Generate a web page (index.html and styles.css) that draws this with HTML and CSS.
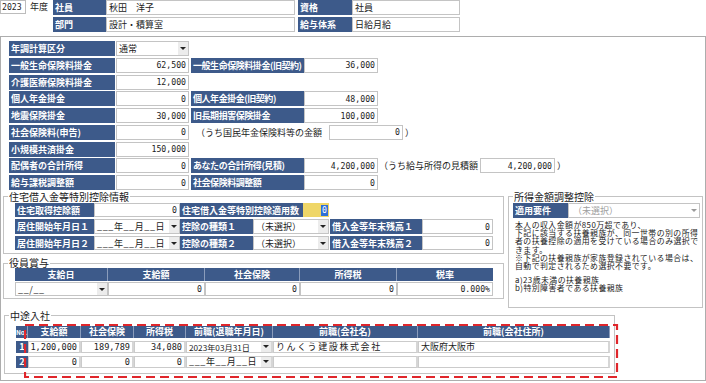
FILE: index.html
```html
<!DOCTYPE html>
<html lang="ja">
<head>
  <meta charset="UTF-8" />
  <title>年末調整 控除情報</title>
  <link rel="stylesheet" href="styles.css">
</head>
<body>
<div class="screen">

  <div class="head">
    <div class="year">2023</div>
    <div class="nendo">年度</div>
    <div class="head-grid">
      <div class="lab">社員</div><div class="box">秋田　洋子</div>
      <div class="lab gap-l">資格</div><div class="box">社員</div>
      <div class="lab">部門</div><div class="box">設計・積算室</div>
      <div class="lab gap-l">給与体系</div><div class="box">日給月給</div>
    </div>
  </div>

  <div class="panel">
    <div class="deduct">
      <div class="drow">
        <div class="lab c1">年調計算区分</div>
        <div class="box sel c2"><span>通常</span><i class="arr"></i></div>
      </div>
      <div class="drow">
        <div class="lab c1">一般生命保険料掛金</div>
        <div class="box num c2">62,500</div>
        <div class="lab c3">一般生命保険料掛金(旧契約)</div>
        <div class="box num c4">36,000</div>
      </div>
      <div class="drow">
        <div class="lab c1">介護医療保険料掛金</div>
        <div class="box num c2">12,000</div>
      </div>
      <div class="drow">
        <div class="lab c1">個人年金掛金</div>
        <div class="box num c2">0</div>
        <div class="lab c3">個人年金掛金(旧契約)</div>
        <div class="box num c4">48,000</div>
      </div>
      <div class="drow">
        <div class="lab c1">地震保険掛金</div>
        <div class="box num c2">30,000</div>
        <div class="lab c3">旧長期損害保険掛金</div>
        <div class="box num c4">100,000</div>
      </div>
      <div class="drow">
        <div class="lab c1">社会保険料(申告)</div>
        <div class="box num c2">0</div>
        <div class="note n1">（うち国民年金保険料等の金額</div>
        <div class="box num c4">0</div>
        <div class="note close">）</div>
      </div>
      <div class="drow">
        <div class="lab c1">小規模共済掛金</div>
        <div class="box num c2">150,000</div>
      </div>
      <div class="drow">
        <div class="lab c1">配偶者の合計所得</div>
        <div class="box num c2">0</div>
        <div class="lab c3">あなたの合計所得(見積)</div>
        <div class="box num c4">4,200,000</div>
        <div class="note n2">（うち給与所得の見積額</div>
        <div class="box num c5">4,200,000</div>
        <div class="note close">）</div>
      </div>
      <div class="drow">
        <div class="lab c1">給与課税調整額</div>
        <div class="box num c2">0</div>
        <div class="lab c3">社会保険料調整額</div>
        <div class="box num c4">0</div>
      </div>
    </div>

    <div class="lower">
      <div class="left">
        <fieldset class="grp housing">
          <legend>住宅借入金等特別控除情報</legend>
          <div class="hgrid">
            <div class="lab">住宅取得控除額</div>
            <div class="box num">0</div>
            <div class="lab span2">住宅借入金等特別控除適用数</div>
            <div class="yellow"><span class="hl">0</span></div>
            <div></div>
            <div></div>
            <div></div>

            <div class="lab">居住開始年月日１</div>
            <div class="box sel"><span class="date">___年__月__日</span><i class="arr"></i></div>
            <div class="lab">控除の種類１</div>
            <div class="box sel span2"><span>（未選択）</span><i class="arr"></i></div>
            <div></div>
            <div class="lab">借入金等年末残高１</div>
            <div class="box num">0</div>

            <div class="lab">居住開始年月日２</div>
            <div class="box sel"><span class="date">___年__月__日</span><i class="arr"></i></div>
            <div class="lab">控除の種類２</div>
            <div class="box sel span2"><span>（未選択）</span><i class="arr"></i></div>
            <div></div>
            <div class="lab">借入金等年末残高２</div>
            <div class="box num">0</div>
          </div>
        </fieldset>

        <fieldset class="grp bonus">
          <legend>役員賞与</legend>
          <div class="btable">
            <div class="th">支給日</div>
            <div class="th">支給額</div>
            <div class="th">社会保険</div>
            <div class="th">所得税</div>
            <div class="th">税率</div>
            <div class="box sel"><span class="date">__/__</span><i class="arr"></i></div>
            <div class="box num">0</div>
            <div class="box num">0</div>
            <div class="box num">0</div>
            <div class="box num">0.000%</div>
          </div>
        </fieldset>
      </div>

      <fieldset class="grp adjust">
        <legend>所得金額調整控除</legend>
        <div class="arow">
          <div class="lab">適用要件</div>
          <div class="box sel dis"><span>（未選択）</span><i class="arr"></i></div>
        </div>
        <div class="memo">
          <p>本人の収入金額が850万超であり、<br>下記に該当する扶養親族が、同一世帯の別の所得<br>者の扶養控除の適用を受けている場合のみ選択で<br>きます。<br>※下記の扶養親族が家族登録されている場合は、<br>自動で判定されるため選択不要です。</p>
          <p class="cases">a)23歳未満の扶養親族<br>b)特別障害者である扶養親族</p>
        </div>
      </fieldset>
    </div>

    <fieldset class="grp midjoin">
      <legend>中途入社</legend>
      <div class="mtable">
        <div class="th no-h">No.</div>
        <div class="th">支給額</div>
        <div class="th">社会保険</div>
        <div class="th">所得税</div>
        <div class="th">前職(退職年月日)</div>
        <div class="th">前職(会社名)</div>
        <div class="th">前職(会社住所)</div>

        <div class="no">1</div>
        <div class="box num">1,200,000</div>
        <div class="box num">189,789</div>
        <div class="box num">34,080</div>
        <div class="box sel"><span class="dt">2023年03月31日</span><i class="arr"></i></div>
        <div class="box"><span class="co">りんくう建設株式会社</span></div>
        <div class="box">大阪府大阪市</div>

        <div class="no">2</div>
        <div class="box num">0</div>
        <div class="box num">0</div>
        <div class="box num">0</div>
        <div class="box sel"><span class="date">___年__月__日</span><i class="arr"></i></div>
        <div class="box"></div>
        <div class="box"></div>
      </div>
    </fieldset>
  </div>

  <svg class="mark" width="596" height="56" viewBox="0 0 596 56">
    <rect x="1" y="1" width="592" height="52" fill="none" stroke="#e0262b" stroke-width="2.2" stroke-dasharray="9 5"/>
  </svg>
</div>
</body>
</html>
```

FILE: styles.css
```css
body {
  margin: 0;
  background: #fff;
}
.screen {
  position: relative;
  width: 706px;
  height: 383px;
  overflow: hidden;
  background: #fff;
  font-family: "Noto Sans CJK JP", "Noto Sans", sans-serif;
  font-size: 9px;
  color: #1b1b1b;
}

/* common cells */
.lab {
  display: flex;
  align-items: center;
  box-sizing: border-box;
  padding-left: 2px;
  background: #3d5a8a;
  color: #fff;
  font-weight: 700;
  white-space: nowrap;
  overflow: hidden;
}
.box {
  display: flex;
  align-items: center;
  box-sizing: border-box;
  padding: 0 2px;
  background: #fff;
  border: 1px solid #c4c4c4;
  white-space: nowrap;
  overflow: hidden;
}
.num {
  justify-content: flex-end;
  font-family: "DejaVu Sans Mono", monospace;
  font-size: 8.2px;
}
.sel {
  justify-content: space-between;
  padding-right: 0;
}
.arr {
  display: flex;
  align-items: center;
  justify-content: center;
  width: 10px;
  height: 100%;
  background: #ececec;
}
.arr::after {
  content: "";
  border-left: 3px solid transparent;
  border-right: 3px solid transparent;
  border-top: 3px solid #222;
}
.dis {
  color: #a0a0a0;
}
.dis .arr {
  background: #fff;
}
.dis .arr::after {
  border-top-color: #9a9a9a;
}
.date {
  letter-spacing: 0.6px;
}

/* header */
.head {
  display: flex;
  height: 36px;
}
.year {
  width: 26px;
  height: 14px;
  box-sizing: border-box;
  border: 1px solid #bcbcbc;
  padding-left: 1px;
  font-family: "DejaVu Sans Mono", monospace;
  font-size: 8.2px;
  line-height: 12px;
}
.nendo {
  width: 27px;
  box-sizing: border-box;
  padding-left: 4px;
  line-height: 14px;
}
.head-grid {
  display: grid;
  grid-template-columns: 53px 189px 57px 108px;
  grid-template-rows: 15px 15px;
  row-gap: 2px;
}
.gap-l {
  margin-left: 3px;
}

/* outer panel */
.panel {
  height: 345px;
  box-sizing: border-box;
  border: 1px solid #adadad;
  padding: 4px 0 0 2px;
}
.deduct {
  margin-left: 6px;
}
.drow {
  display: flex;
  height: 15px;
  margin-bottom: 1.75px;
}
.c1 { width: 106px; }
.c2 { width: 73px; margin-left: 1px; }
.c3 { width: 113px; margin-left: 2px; letter-spacing: -0.45px; }
.c4 { width: 74px; }
.c5 { width: 75px; }
.note {
  display: flex;
  align-items: center;
  white-space: nowrap;
}
.n1 { width: 133px; margin-left: 7px; }
.n2 { width: 101px; margin-left: 1px; }
.close { margin-left: 2px; }

/* group boxes */
.grp {
  margin: 0;
  min-width: 0;
  box-sizing: border-box;
  border: 1px solid #c3c3c3;
}
.grp legend {
  margin-left: -7px;
  padding: 0 1px;
  font-size: 10px;
  line-height: 10px;
  color: #222;
}
.lower {
  display: grid;
  grid-template-columns: 501px 195px;
  column-gap: 4px;
  margin-top: 1px;
  align-items: start;
}
.left {
  display: flex;
  flex-direction: column;
  gap: 4px;
}

.housing {
  padding: 1px 9px 3px 11px;
}
.hgrid {
  display: grid;
  grid-template-columns: 79px 86px 73px 50px 26px 1px 92px 71px;
  grid-auto-rows: 14.5px;
  row-gap: 2px;
}
.span2 {
  grid-column: span 2;
}
.yellow {
  display: flex;
  align-items: center;
  justify-content: flex-end;
  padding-right: 1px;
  background: #efd667;
  font-family: "DejaVu Sans Mono", monospace;
  font-size: 8.2px;
}
.hl {
  background: #2f6fd6;
  color: #fff;
  padding: 0 1px;
  line-height: 11px;
}

.bonus {
  padding: 0 9px 2px 11px;
}
.btable {
  display: grid;
  grid-template-columns: 93px 97px 95px 97px 96px;
  grid-template-rows: 12.5px 14px;
  row-gap: 1.5px;
}
.th {
  display: flex;
  align-items: center;
  justify-content: center;
  background: #3d5a8a;
  color: #fff;
  font-weight: 700;
  white-space: nowrap;
  border-right: 1px solid #8a9cbb;
}
.th:last-child,
.btable .th:nth-child(5) {
  border-right: 0;
}

.adjust {
  height: 116px;
  padding: 1px 2px 0 4px;
}
.adjust legend {
  margin-left: 0;
}
.arow {
  display: flex;
  height: 15px;
}
.arow .lab {
  width: 55px;
}
.arow .box {
  flex: 1;
  padding-left: 4px;
}
.memo {
  padding: 3px 0 0 2px;
  font-size: 7.9px;
  letter-spacing: 0.45px;
  line-height: 8.3px;
  white-space: nowrap;
}
.memo p {
  margin: 0;
}
.memo .cases {
  margin-top: 5px;
}

.midjoin {
  width: 611px;
  margin: 3px 0 0 1px;
  padding: 5px 4px 5px 11px;
}
.mtable {
  display: grid;
  grid-template-columns: 12px 53px 53px 52px 87px 145px 192px;
  grid-template-rows: 12px 12px 12px;
  row-gap: 3px;
}
.mtable .box {
  border-color: #cbcbcb;
  border-right: 2px solid #d6d6d6;
}
.mtable .num {
  font-size: 8.6px;
}
.no-h {
  font-size: 6.5px;
}
.no {
  display: flex;
  align-items: center;
  justify-content: center;
  background: #3d5a8a;
  color: #fff;
  font-weight: 700;
}
.dt {
  font-size: 8.2px;
}
.co {
  letter-spacing: 1.6px;
}

.mark {
  position: absolute;
  left: 24px;
  top: 324px;
}
```
